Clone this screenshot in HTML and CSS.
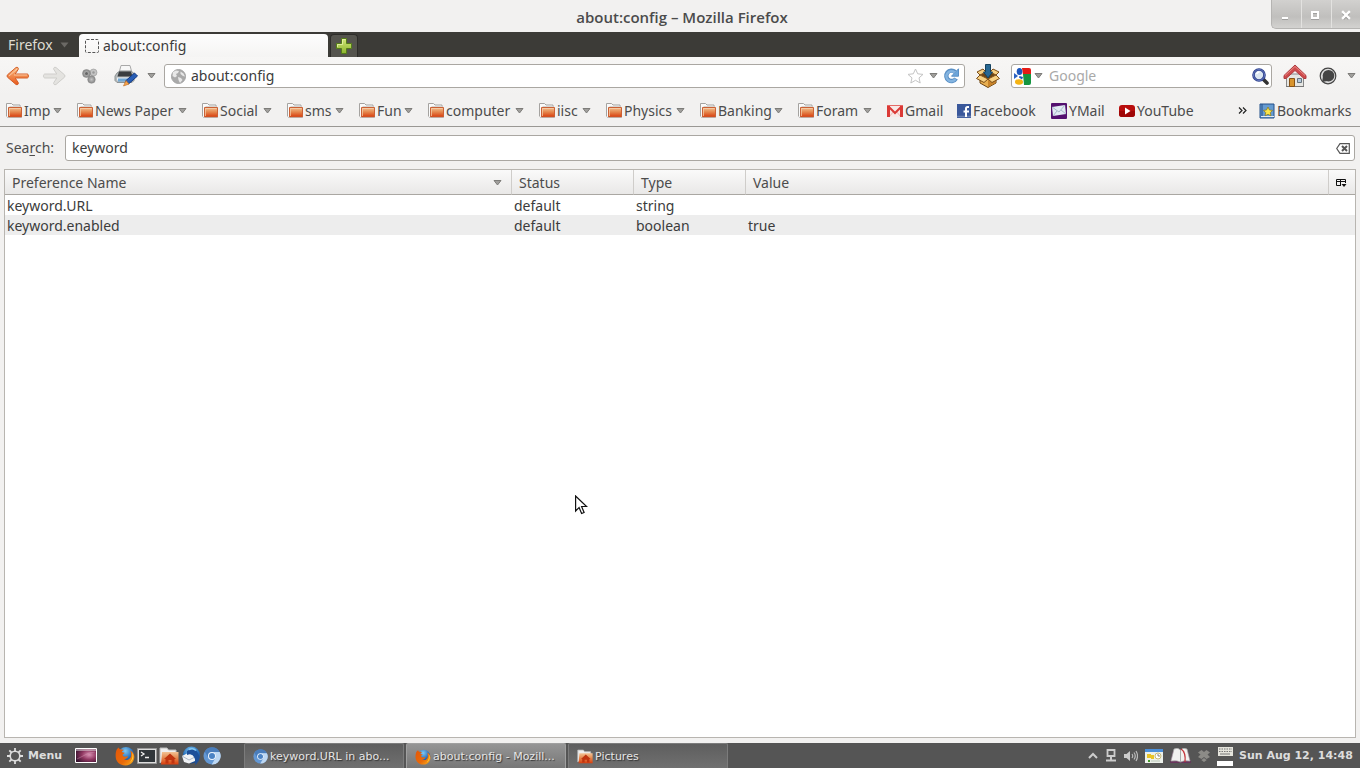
FILE: index.html
```html
<!DOCTYPE html>
<html lang="en">
<head>
<meta charset="utf-8">
<title>about:config - Mozilla Firefox</title>
<link rel="stylesheet" href="styles.css">
</head>
<body>
<svg class="sprite" aria-hidden="true">
  <defs>
    <linearGradient id="orange" x1="0" y1="0" x2="0" y2="1"><stop offset="0" stop-color="#f3c294"/><stop offset=".45" stop-color="#e58a50"/><stop offset="1" stop-color="#d93c0c"/></linearGradient>
    <linearGradient id="arrow-orange" x1="0" y1="0" x2="0" y2="1"><stop offset="0" stop-color="#f9b87f"/><stop offset="1" stop-color="#e95a1c"/></linearGradient>
    <linearGradient id="green" x1="0" y1="0" x2="0" y2="1"><stop offset="0" stop-color="#d3e77a"/><stop offset="1" stop-color="#8cb52c"/></linearGradient>
    <radialGradient id="grey-ball"><stop offset="0" stop-color="#c4c4c4"/><stop offset="1" stop-color="#858585"/></radialGradient>
    <radialGradient id="blue-ball" cx=".45" cy=".25" r=".8"><stop offset="0" stop-color="#7fc8f2"/><stop offset=".6" stop-color="#256bb8"/><stop offset="1" stop-color="#153c7b"/></radialGradient>
    <linearGradient id="fox" x1="0" y1="0" x2="1" y2="1"><stop offset="0" stop-color="#e45708"/><stop offset=".6" stop-color="#e96a0a"/><stop offset="1" stop-color="#fbb41c"/></linearGradient>
    <radialGradient id="nebula" cx=".65" cy=".45" r=".7"><stop offset="0" stop-color="#d991b3"/><stop offset=".5" stop-color="#8f3660"/><stop offset="1" stop-color="#36122e"/></radialGradient>
  </defs>
  <symbol id="folder" viewBox="0 0 16 15">
    <path d="M.5 13.500V.5h5l1.500 1.500h7v4" fill="#fafafa" stroke="#a5a3a0"/>
    <path d="M3.500 3.500H14" stroke="#d7d5d2"/>
    <path d="M2.500 4.500h13v9.500h-13z" fill="url(#orange)" stroke="#cb6135"/>
    <path d="M3.500 13V5.500h11" fill="none" stroke="#f6d1ae" stroke-opacity=".7"/>
    <path d="M1 14.500h15" stroke="#aaa" stroke-opacity=".6"/>
  </symbol>
  <symbol id="down" viewBox="0 0 9 6">
    <path d="M1 .5h7L4.500 5z" fill="#a09f9c" stroke="#7d7c79"/>
  </symbol>
  <symbol id="firefox" viewBox="0 0 20 20">
    <circle cx="11" cy="9" r="8" fill="url(#blue-ball)"/>
    <path d="M1.500 4C2 2.800 3 2 4 1.500c0 1 .5 1.500 1.300 2 1.500-.2 3 .1 3.700.5-1 .3-2 1-2.200 1.800.5.800 2 .6 2.700.9-.2 1-1.200 1.300-2 1.800C7.700 10.200 9 11 10.500 10.700c1-.3 1.700-.7 2.500-.2-.6 1.700-2 2.700-4 2.500 2.800 2 6.300.5 7-3 .3-2.500-.3-4.500-1-5.500 3.500 1.500 5 4.500 4 8.500-1 4-4.500 6.500-8.500 6.500C5 19.500 1 16 .7 11 .5 8 .8 6 1.500 4z" fill="url(#fox)"/>
    <path d="M17 6c2.500 4 1.500 8.500-2.500 11 3-3.500 3.500-6.500 2.500-11z" fill="#ffd43a"/>
  </symbol>
  <symbol id="chromium" viewBox="0 0 18 18">
    <circle cx="9" cy="9" r="8.500" fill="#6397d3"/>
    <path d="M9 5h7.700A8.500 8.500 0 0 0 1.700 4.600L5.500 11A4 4 0 0 1 9 5z" fill="#4a7dbb"/>
    <path d="M9 5h7.700a8.500 8.500 0 0 1-8 12.500L12.500 11A4 4 0 0 0 9 5z" fill="#bcd7f3"/>
    <circle cx="9" cy="9" r="4" fill="#eef5fd"/><circle cx="9" cy="9" r="3" fill="#4a82c4"/>
  </symbol>
  <symbol id="home-folder" viewBox="0 0 20 18">
    <path d="M1 16V1h7l1.500 2H17v3" fill="#efefef" stroke="#bbb"/>
    <path d="M3 5h16.500v12.500H2z" fill="url(#orange)"/>
    <path d="M11 6.500l6 5.500h-1.500v4.500h-3V13h-3v3.500h-3V12H5z" fill="#bf3410"/>
  </symbol>
</svg>

<header class="titlebar">
  <h1 class="title">about:config – Mozilla Firefox</h1>
  <div class="controls">
    <button class="control" aria-label="Minimize"><svg width="12" height="12" viewBox="0 0 12 12"><path d="M3 10h6" stroke="#777" stroke-opacity=".5" stroke-width="2"/><path d="M3 9h6" stroke="#fff" stroke-width="2"/></svg></button>
    <button class="control" aria-label="Maximize"><svg width="12" height="12" viewBox="0 0 12 12"><path d="M3 4h6v6H3z" fill="none" stroke="#888" stroke-opacity=".6" stroke-width="2"/><path d="M3 3h6v6H3z" fill="none" stroke="#fff" stroke-width="2"/></svg></button>
    <button class="control" aria-label="Close"><svg width="12" height="12" viewBox="0 0 12 12"><path d="M3 4l6 6m0-6l-6 6" stroke="#888" stroke-opacity=".7" stroke-width="2.600"/><path d="M3 3l6 6m0-6l-6 6" stroke="#fff" stroke-width="2.400" stroke-linecap="square"/></svg></button>
  </div>
</header>

<nav class="tabbar" aria-label="Tabs">
  <button class="app-menu">Firefox<svg width="9" height="6" viewBox="0 0 9 6"><path d="M.5.5h8L4.500 5.500z" fill="#6b6965"/></svg></button>
  <button class="tab"><svg width="14" height="14" viewBox="0 0 14 14"><rect x=".5" y=".5" width="13" height="13" rx="1" fill="none" stroke="#555" stroke-dasharray="3 1.500"/></svg>about:config</button>
  <button class="new-tab" aria-label="New tab"><svg width="16" height="16" viewBox="0 0 16 16"><path d="M5.500.5h5v5h5v5h-5v5h-5v-5h-5v-5h5z" fill="url(#green)" stroke="#547c19"/><path d="M6.500 6.500v-5h3M1.500 9V6.500h5" fill="none" stroke="#eef5b5" stroke-opacity=".7"/></svg></button>
</nav>

<div class="toolbar">
  <button class="tool" aria-label="Back"><svg width="24" height="20" viewBox="0 0 24 20"><path d="M10 1.500c1.500-.8 3 .6 2.200 2L9.200 8H21c1 0 1.500.8 1.500 2s-.5 2-1.500 2H9.200l3 4.500c.8 1.400-.7 2.800-2.200 2L1.500 11.200q-1-1.200 0-2.400z" fill="url(#arrow-orange)" stroke="#d4602b"/><path d="M3 10l8-7M8 9h13" fill="none" stroke="#fde0c2" stroke-opacity=".7"/></svg></button>
  <button class="tool forward" aria-label="Forward"><svg width="24" height="20" viewBox="0 0 24 20"><path d="M14 1.500c-1.500-.8-3 .6-2.200 2l3 4.500H3c-1 0-1.500.8-1.500 2s.5 2 1.500 2h11.800l-3 4.500c-.8 1.400.7 2.800 2.200 2l8.500-7.300q1-1.200 0-2.400z" fill="#e4e3e0" stroke="#cfcecb"/></svg></button>
  <button class="tool dots" aria-label="Downloads"><svg width="16" height="16" viewBox="0 0 16 16"><g fill="url(#grey-ball)" stroke="#8a8a8a" stroke-opacity=".5"><circle cx="11.500" cy="4.500" r="3.500" fill="#c4c4c4"/><circle cx="9.500" cy="11.500" r="3.800"/><circle cx="4.500" cy="5.500" r="4"/></g><circle cx="4.500" cy="5.500" r="1.500" fill="#666"/><circle cx="11.500" cy="4.500" r="1.200" fill="#999"/></svg></button>
  <button class="tool printer" aria-label="Print"><svg width="24" height="22" viewBox="0 0 24 22"><path d="M5 8L7 .5h9L18 8z" fill="#f7f7f7" stroke="#a9a9a9"/><path d="M3 8l3-2h11l3 2.500v7l-2 2H3l-2-2V11z" fill="#b6babb" stroke="#8d9394"/><path d="M5 6.500h12l1.500 5H3.500z" fill="#3a3e41"/><path d="M3 12.500h16v3H3z" fill="#e7eef3"/><path d="M4 15h10" stroke="#71a9d7" stroke-width="3"/><path d="M20.500 8l3 3-9 8-3-3z" fill="#285eb5" stroke="#153b84"/><path d="M12 15.500L9.500 21l5.500-2z" fill="#f5a44d" stroke="#ba641a" stroke-width=".6"/></svg></button>
  <button class="tool more" aria-label="Print options"><svg width="9" height="6"><use href="#down"/></svg></button>
  <div class="field url">
    <svg width="15" height="15" viewBox="0 0 15 15"><circle cx="7.500" cy="7.500" r="7" fill="#aaa" stroke="#a4a4a4"/><path d="M2 3l3-1.500 3 .5-1 2-2 1 1 2-2 1.500L1.500 7zM9.500 2.500l3 2 1.500 3-2-.5-2.500-2zM7 8l3 1 1.500 2L9 14l-1.500-3z" fill="#e8e8e8"/></svg>
    <input class="input" aria-label="Location" value="about:config">
    <button class="mini" aria-label="Bookmark this page"><svg width="17" height="16" viewBox="0 0 17 16"><path d="M8.500 1l2.200 4.800 5.300.6-4 3.500 1.200 5.100-4.700-2.700L3.800 15 5 9.900 1 6.400l5.300-.6z" fill="#fff" stroke="#c4c4c4"/></svg></button>
    <button class="mini" aria-label="History"><svg width="9" height="6"><use href="#down"/></svg></button>
    <button class="mini" aria-label="Reload"><svg width="17" height="16" viewBox="0 0 17 16"><path d="M13 10.500A5.200 5.200 0 1 1 12 4" fill="none" stroke="#5a90c5" stroke-width="4.400"/><path d="M15.500.8v7.400H8.500z" fill="#6ca5da" stroke="#5a90c5"/><path d="M12.500 11A5 5 0 1 1 11.500 4.300" fill="none" stroke="#84b4e0" stroke-width="2.400"/></svg></button>
  </div>
  <button class="tool" aria-label="Download package"><svg width="24" height="24" viewBox="0 0 24 24"><path d="M4 11l8-4 8 4v8l-8 4.500L4 19z" fill="#e8ae4f" stroke="#6d4513"/><path d="M12 15v8l7.500-4v-8z" fill="#c98329"/><path d="M4.500 11L12 7l7.500 4-7.500 4z" fill="#6d4513"/><path d="M4 11l8 4-4 3.500-7.500-4zM20 11l-8 4 4 3.500 7.500-4zM4 11L1 8l6-3 3 3zM20 11l3-3-6-3-3 3z" fill="#f7d082" stroke="#7b4d18"/><path d="M9.500.5h5V8h2L12 14 7.500 8h2z" fill="#286894" stroke="#16425f"/></svg></button>
  <div class="field search">
    <svg width="17" height="17" viewBox="0 0 17 17"><path d="M0 0h17v17H0z" fill="#fff"/><path d="M8 0h7q2 0 2 2v5H9z" fill="#e51b16"/><path d="M9 6h8v9q0 2-2 2h-5z" fill="#159540"/><path d="M0 5l4 3-4 3z" fill="#2b62c2"/><ellipse cx="5.500" cy="3.500" rx="2.800" ry="3.500" fill="#1d57bd"/><path d="M5.500 8l3.500 1-1 2.500-3-2z" fill="#1d57bd"/><ellipse cx="5" cy="14" rx="4" ry="2.700" fill="#f5b313"/></svg>
    <button class="mini" aria-label="Search engines"><svg width="9" height="6"><use href="#down"/></svg></button>
    <input class="input" aria-label="Web search" placeholder="Google">
    <button class="mini" aria-label="Search"><svg width="17" height="17" viewBox="0 0 17 17"><path d="M11.500 11.500l3.500 3.500" stroke="#333" stroke-width="3.600" stroke-linecap="round"/><circle cx="7" cy="7" r="5.500" fill="#dbe6f1" stroke="#2c3f8c" stroke-width="2.600"/><circle cx="7" cy="7" r="5.500" fill="none" stroke="#6579bd"/><path d="M4.500 6q1-2 3-2" fill="none" stroke="#fff" stroke-width="1.500"/></svg></button>
  </div>
  <button class="tool" aria-label="Home"><svg width="24" height="24" viewBox="0 0 24 24"><path d="M3.500 10h17v12.500h-17z" fill="#e6e6e2" stroke="#888"/><path d="M3 22.500h18" stroke="#777"/><path d="M6.500 14.500h5v8h-5z" fill="#d8942d" stroke="#865217"/><path d="M14.500 14.500h4v4h-4z" fill="#b6cbdc" stroke="#65727e"/><path d="M12 1L1 11.500v3h2l9-8 9 8h2v-3z" fill="#ce4b4c" stroke="#b03c40"/><path d="M2 11.500l10-9 10 9" fill="none" stroke="#e88986"/></svg></button>
  <button class="tool round" aria-label="Account"><svg width="18" height="18" viewBox="0 0 18 18"><circle cx="9" cy="9" r="7.800" fill="#ddd" stroke="#444" stroke-width="1.200"/><circle cx="9.500" cy="8.700" r="5.800" fill="#454545"/><path d="M4 9l-.8 6 5-1z" fill="#454545"/></svg></button>
  <button class="tool tail" aria-label="More tools"><svg width="9" height="6"><use href="#down"/></svg></button>
</div>

<nav class="bookmarks" aria-label="Bookmarks">
  <button class="mark"><svg width="16" height="15"><use href="#folder"/></svg><span class="label">Imp</span><svg width="9" height="6"><use href="#down"/></svg></button>
  <button class="mark"><svg width="16" height="15"><use href="#folder"/></svg><span class="label">News Paper</span><svg width="9" height="6"><use href="#down"/></svg></button>
  <button class="mark"><svg width="16" height="15"><use href="#folder"/></svg><span class="label">Social</span><svg width="9" height="6"><use href="#down"/></svg></button>
  <button class="mark"><svg width="16" height="15"><use href="#folder"/></svg><span class="label">sms</span><svg width="9" height="6"><use href="#down"/></svg></button>
  <button class="mark"><svg width="16" height="15"><use href="#folder"/></svg><span class="label">Fun</span><svg width="9" height="6"><use href="#down"/></svg></button>
  <button class="mark"><svg width="16" height="15"><use href="#folder"/></svg><span class="label">computer</span><svg width="9" height="6"><use href="#down"/></svg></button>
  <button class="mark"><svg width="16" height="15"><use href="#folder"/></svg><span class="label">iisc</span><svg width="9" height="6"><use href="#down"/></svg></button>
  <button class="mark"><svg width="16" height="15"><use href="#folder"/></svg><span class="label">Physics</span><svg width="9" height="6"><use href="#down"/></svg></button>
  <button class="mark"><svg width="16" height="15"><use href="#folder"/></svg><span class="label">Banking</span><svg width="9" height="6"><use href="#down"/></svg></button>
  <button class="mark"><svg width="16" height="15"><use href="#folder"/></svg><span class="label">Foram</span><svg width="9" height="6"><use href="#down"/></svg></button>
  <a class="mark" href="#gmail"><svg width="16" height="12" viewBox="0 0 16 12"><path d="M0 0h16v12H0z" fill="#f8e9e7"/><path d="M2 12l5-6m7 6L9 6" stroke="#e9b5b1"/><path d="M0 .5h16" stroke="#e56a66"/><path d="M1.500 12V1M14.500 12V1" stroke="#db3a36" stroke-width="3"/><path d="M1.500 1.500L8 8l6.500-6.500" fill="none" stroke="#db3a36" stroke-width="2"/></svg><span class="label">Gmail</span></a>
  <a class="mark" href="#facebook"><svg width="14" height="14" viewBox="0 0 14 14"><path d="M0 0h14v14H0z" fill="#3a589b"/><path d="M0 12.500h14" stroke="#6d84b4" stroke-width="1.500"/><path d="M12 3h-1.500q-1.500 0-1.500 1.500V13M6.500 7.500H12" fill="none" stroke="#fff" stroke-width="2"/></svg><span class="label">Facebook</span></a>
  <a class="mark" href="#ymail"><svg width="16" height="16" viewBox="0 0 16 16"><rect width="16" height="16" rx="1" fill="#54106f"/><path d="M1 4l13-2 1 9-13 2z" fill="#e1eaf3"/><path d="M1 4l7 5 6-7M2 13l4-5m9 3l-5-4" fill="none" stroke="#a9b8ca"/></svg><span class="label">YMail</span></a>
  <a class="mark" href="#youtube"><svg width="16" height="12" viewBox="0 0 16 12"><rect width="16" height="12" rx="3" fill="#b80d0c"/><path d="M0 6h16v3q0 3-3 3H3q-3 0-3-3z" fill="#a00707"/><path d="M6 2.500v7L11.500 6z" fill="#fff"/></svg><span class="label">YouTube</span></a>
  <button class="mark overflow" aria-label="More bookmarks"><svg width="9" height="7" viewBox="0 0 9 7"><path d="M1 .5l3 3-3 3m4-6l3 3-3 3" fill="none" stroke="#222" stroke-width="1.200"/></svg></button>
  <button class="mark last"><svg width="16" height="16" viewBox="0 0 16 16"><path d="M1 1h14v14H1z" fill="#659bd1" stroke="#24508a"/><path d="M3 1v12" stroke="#24508a"/><path d="M2 13.500h13" stroke="#e5edf5"/><path d="M9 4l1.500 3 3 .4-2.200 2.200.6 3.200L9 11.200l-2.900 1.600.6-3.200-2.200-2.200 3-.4z" fill="#fbe64b" stroke="#8a7515" stroke-width=".7"/></svg><span class="label">Bookmarks</span></button>
</nav>

<main class="config">
  <div class="filter">
    <label class="filter-label" for="filter">Sea<u>r</u>ch:</label>
    <div class="field filter-field">
      <input class="input" id="filter" value="keyword">
      <button class="mini" aria-label="Clear"><svg width="14" height="11" viewBox="0 0 14 11"><path d="M.7 5.500L4 .7h9.300v9.600H4z" fill="#fff" stroke="#555" stroke-width="1.200"/><path d="M6 3l5 5m0-5L6 8" stroke="#555" stroke-width="2"/></svg></button>
    </div>
  </div>
  <div class="tree">
    <table class="prefs">
      <colgroup><col class="col-name"><col class="col-status"><col class="col-type"><col><col class="col-picker"></colgroup>
      <thead><tr>
        <th><div class="sorted">Preference Name<svg width="9" height="6"><use href="#down"/></svg></div></th>
        <th>Status</th><th>Type</th><th>Value</th>
        <th class="picker"><button class="mini" aria-label="Choose columns"><svg width="11" height="10" viewBox="0 0 11 10"><path d="M9.500 5V1.500h-9v6H5M.5 3.500h9M4.500 1v6.500" fill="none" stroke="#111"/><path d="M5.500 6h5L8 9z" fill="#111"/></svg></button></th>
      </tr></thead>
      <tbody>
        <tr><td>keyword.URL</td><td>default</td><td>string</td><td></td><td></td></tr>
        <tr><td>keyword.enabled</td><td>default</td><td>boolean</td><td>true</td><td></td></tr>
      </tbody>
    </table>
  </div>
</main>

<footer class="panel">
  <button class="menu"><svg width="16" height="16" viewBox="0 0 16 16"><circle cx="8" cy="8" r="4.800" fill="none" stroke="#ddd" stroke-width="1.600"/><g stroke="#ddd" stroke-width="1.800"><path d="M8 0v3M8 13v3M0 8h3M13 8h3M2.300 2.300l2.200 2.200M11.500 11.500l2.200 2.200M13.700 2.300l-2.200 2.200M4.500 11.500l-2.200 2.200"/></g></svg>Menu</button>
  <button class="launch desktop" aria-label="Show desktop"><svg width="22" height="15" viewBox="0 0 22 15"><path d="M.5.500h21v14H.5z" fill="url(#nebula)" stroke="#fff"/><path d="M1 2h20" stroke="#e8e8e8"/><path d="M2 11l12-6 6-1" stroke="#d9a0bc" stroke-opacity=".4" fill="none"/></svg></button>
  <div class="launchers">
    <button class="launch" aria-label="Firefox"><svg width="20" height="20"><use href="#firefox"/></svg></button>
    <button class="launch" aria-label="Terminal"><svg width="20" height="16" viewBox="0 0 20 16"><path d="M.5.500h19v15H.5z" fill="#ddd" stroke="#999"/><path d="M2 2h16v12H2z" fill="#30363a"/><path d="M4 4l3 2-3 2M8 9.500h4" fill="none" stroke="#eee" stroke-width="1.300"/></svg></button>
    <button class="launch" aria-label="Home folder"><svg width="20" height="18"><use href="#home-folder"/></svg></button>
    <button class="launch" aria-label="Thunderbird"><svg width="20" height="20" viewBox="0 0 20 20"><circle cx="10.500" cy="9" r="8.500" fill="url(#blue-ball)"/><path d="M1 10l6-3 7 3v5l-6 2.500-5-1.500z" fill="#f0f2f5"/><path d="M1 10l7 4 6-3" fill="none" stroke="#aab6c6"/><path d="M6 5q7-5 11 2 4 7-3 12 1-5-1-8-2-4-7-2z" fill="#1d4f99"/><path d="M8 3.500q4-2 7 1" stroke="#85c8f2" fill="none" stroke-width="1.500"/></svg></button>
    <button class="launch" aria-label="Chromium"><svg width="18" height="18"><use href="#chromium"/></svg></button>
  </div>
  <div class="tasks">
    <button class="task"><svg width="15" height="15"><use href="#chromium"/></svg>keyword.URL in abo...</button>
    <button class="task active"><svg width="16" height="16"><use href="#firefox"/></svg>about:config - Mozill...</button>
    <button class="task"><svg width="16" height="15"><use href="#home-folder"/></svg>Pictures</button>
  </div>
  <div class="tray">
    <svg width="10" height="7" viewBox="0 0 10 7"><path d="M1 6l4-4 4 4" fill="none" stroke="#ccc" stroke-width="2"/></svg>
    <svg width="12" height="13" viewBox="0 0 12 13"><path d="M2.500 1h7v6h-7z" fill="none" stroke="#ccc" stroke-width="1.800"/><path d="M6 8v3M1 11.500h10" stroke="#ccc" stroke-width="2"/></svg>
    <svg width="14" height="12" viewBox="0 0 14 12"><path d="M0 4h2.500L6 1v10L2.500 8H0z" fill="#ccc"/><path d="M8 4q1.500 2 0 4M10 2.500q2.500 3.500 0 7M12 1q3 5 0 10" fill="none" stroke="#bbb" stroke-width="1.200"/></svg>
    <svg width="18" height="14" viewBox="0 0 18 14"><path d="M0 0h18v14H0z" fill="#edf1eb"/><path d="M0 1.500h18" stroke="#4b8fda" stroke-width="3"/><path d="M2 5h4v4H2zM6 6h3v4H6z" fill="#e9c427"/><circle cx="13" cy="7" r="3" fill="#fff" stroke="#c8b873"/><path d="M13 5v2h2" stroke="#555" fill="none" stroke-width=".7"/><path d="M3 12h2" stroke="#459b29" stroke-width="2"/><path d="M6 12h9" stroke="#bbc8b8"/></svg>
    <svg width="21" height="16" viewBox="0 0 21 16"><path d="M0 15L3 3h15l3 12z" fill="#68345b"/><path d="M1 13L4 1q4-2 6.500 1Q13-1 17 1l3 12q-6-1-9.500 1Q7 12 1 13z" fill="#f2f2f0" stroke="#aaa" stroke-width=".7"/><path d="M10.500 2v12" stroke="#aaa"/><path d="M11 1q5 3 4 13" stroke="#c5363c" stroke-width="1.300" fill="none"/></svg>
    <svg width="12" height="12" viewBox="0 0 12 12"><path d="M3.500 0L6 2 8.500 0 12 2.500 9.500 4.500 12 7 8.500 9 6 7 3.500 9 0 7l2.500-2.500L0 2.500zM2.500 9.500l1 .5L6 8l2.500 2 1-.5L6 12z" fill="#8c8b87"/><path d="M6 2l3 2.500L6 7 3 4.500z" fill="#8c8b87"/></svg>
    <svg width="16" height="20" viewBox="0 0 16 20"><path d="M1 1h15v9H1z" fill="#e5e4dc"/><path d="M2 3h13M2 5.500h13" stroke="#777" stroke-dasharray="1.500 1"/><path d="M3 8h10" stroke="#777"/><path d="M0 15h16v5H0z" fill="#fff"/></svg>
  </div>
  <time class="clock">Sun Aug 12, 14:48</time>
</footer>

<svg class="pointer" width="13" height="20" viewBox="0 0 13 20" aria-hidden="true"><path d="M.6 1v15l3.500-3.500 2.500 6 2.500-1-2.500-6h5z" fill="#fff" stroke="#111" stroke-width="1.200"/></svg>
</body>
</html>
```
FILE: styles.css
```css
* { box-sizing: border-box; }
body {
  margin: 0;
  min-height: 100vh;
  display: flex;
  flex-direction: column;
  background: #f2f1f0;
  color: #3c3c3c;
  font: 14px/20px "Noto Sans", "Open Sans", sans-serif;
}
button, input { font: inherit; color: inherit; margin: 0; padding: 0; border: 0; background: none; }
button { display: flex; align-items: center; justify-content: center; }
svg { display: block; flex: none; }
.sprite { position: absolute; width: 0; height: 0; }

.titlebar { display: grid; grid-template-columns: 1fr auto 1fr; height: 32px; }
.title { grid-column: 2; margin: 0; padding-left: 4px; font: 600 15px/34px "Open Sans", "Noto Sans", sans-serif; color: #4b4b4b; }
.controls {
  justify-self: end;
  display: flex;
  height: 29px;
  border: 1px solid #b5b4b2;
  border-width: 0 0 1px 1px;
  border-radius: 0 0 0 5px;
  background: linear-gradient(#d2d1cf, #c0bfbd 60%, #d3d2d0);
}
.control { width: 30px; padding: 2px 3px 0 0; border-right: 1px solid #e3e2e0; }
.control:last-child { width: 28px; padding-right: 1px; border: 0; }

.tabbar { display: flex; align-items: flex-end; height: 25px; background: #3c3b37; }
.app-menu { width: 79px; height: 25px; padding-left: 8px; gap: 7px; justify-content: flex-start; color: #dfdbd2; }
.tab {
  width: 249px;
  height: 23px;
  padding: 0 6px;
  gap: 4px;
  justify-content: flex-start;
  border-radius: 4px 4px 0 0;
  background: linear-gradient(#fdfdfd, #f5f4f3);
}
.new-tab { width: 28px; height: 23px; margin-left: 2px; border: 1px solid #2d2c29; border-bottom: 0; border-radius: 4px 4px 0 0; background: #55544e; }

.toolbar { display: flex; align-items: center; height: 38px; padding: 0 4px 0 6px; background: linear-gradient(#f7f6f5, #f2f1f0); }
.forward { margin-left: 12px; }
.dots, .printer { margin-left: 16px; }
.more { margin: 0 8px 0 9px; }
.round { margin-left: 12px; }
.tail { margin-left: 10px; }
.field {
  display: flex;
  align-items: center;
  height: 24px;
  border: 1px solid #aaa7a2;
  border-radius: 3px;
  background: #fff;
}
.input { flex: 1; min-width: 0; outline: 0; }
.input::placeholder { color: #a9a9a9; opacity: 1; }
.url { flex: 1; padding: 0 4px 0 6px; gap: 5px; margin-right: 11px; }
.search { width: 261px; padding: 0 2px; gap: 3px; margin: 0 11px; }
.search .input { padding-left: 3px; }

.bookmarks {
  display: grid;
  grid-template-columns: 71px 125px 85px 72px 69px 111px 67px 94px 98px 89px 70px 94px 68px 1fr 21px 95px;
  align-items: center;
  height: 32px;
  padding: 0 6px;
  border-bottom: 1px solid #9a9894;
}
.mark { display: flex; align-items: center; gap: 2px; padding-right: 15px; color: #4c4c4c; text-decoration: none; white-space: nowrap; }
button.mark .label { flex: 1; text-align: left; }
a.mark { padding-right: 0; }
.mark.overflow, .mark.last { padding-right: 0; }
.mark.overflow { justify-content: flex-start; }

.config { flex: 1; display: flex; flex-direction: column; padding: 8px 4px 5px; }
.filter { display: flex; align-items: center; gap: 11px; margin-bottom: 8px; padding-right: 1px; }
.filter-label { padding-left: 2px; color: #4c4c4c; }
.filter u { text-underline-offset: 2px; }
.filter-field { flex: 1; height: 26px; padding: 0 4px 0 6px; }
.tree { flex: 1; border: 1px solid #b8b5b0; background: #fff; }
.prefs { width: 100%; table-layout: fixed; border-collapse: separate; border-spacing: 0; }
.col-name { width: 507px; }
.col-status { width: 122px; }
.col-type { width: 112px; }
.col-picker { width: 26px; }
.prefs th {
  height: 25px;
  padding: 2px 7px 0;
  border-right: 1px solid #cfcdca;
  border-bottom: 1px solid #aaa7a2;
  background: linear-gradient(#fafafa, #e9e8e7);
  color: #4c4c4c;
  font-weight: normal;
  text-align: left;
}
.prefs th.picker { border-right: 0; }
.sorted { display: flex; align-items: center; justify-content: space-between; padding-right: 2px; }
.prefs td { height: 20px; padding: 2px 2px 0; line-height: 18px; }
.prefs tbody tr:nth-child(even) { background: #ededed; }

.panel {
  display: flex;
  align-items: center;
  height: 25px;
  padding: 0 3px 0 7px;
  background: #555;
  color: #e6e6e6;
  font: 11px/16px "DejaVu Sans", sans-serif;
}
.menu { gap: 5px; font-weight: bold; color: #ddd; }
.desktop { margin-left: 13px; }
.launchers { display: flex; align-items: center; gap: 2px; margin: 0 23px 0 18px; }
.tasks { flex: 1; display: flex; gap: 2px; }
.task {
  width: 160px;
  height: 25px;
  padding: 1px 8px 0;
  gap: 2px;
  justify-content: flex-start;
  border: 1px solid #7c7c7c;
  border-bottom: 0;
  border-radius: 2px 2px 0 0;
  background: linear-gradient(#5e5e5e, #707070);
  text-shadow: 1px 1px 1px #333;
  white-space: nowrap;
}
.task.active { background: linear-gradient(#959595, #777); border-color: #a0a0a0; }
.tray { display: flex; align-items: center; gap: 7px; margin-right: 6px; }
.clock { min-width: 118px; font-weight: bold; color: #ddd; white-space: nowrap; }

.pointer { position: absolute; left: 575px; top: 495px; }
```
